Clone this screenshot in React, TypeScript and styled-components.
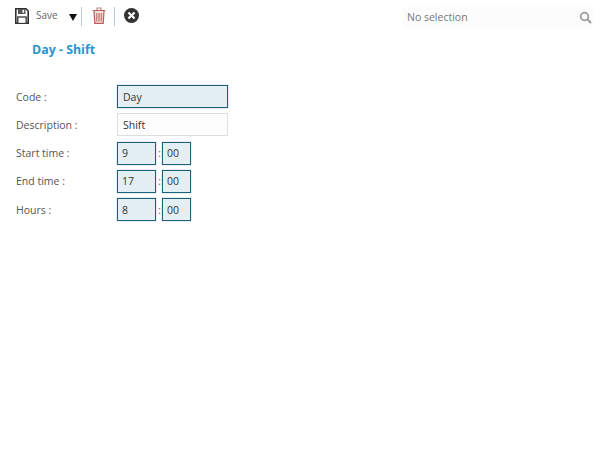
import React from 'react';
import styled, { createGlobalStyle } from 'styled-components';

const Global = createGlobalStyle`
  html, body {
    margin: 0;
    padding: 0;
    background: #fff;
    font-family: "Open Sans", sans-serif;
  }
`;

const Page = styled.div`
  width: 600px;
  height: 461px;
  overflow: hidden;
  background: #fff;
`;

const Toolbar = styled.div`
  height: 26px;
  padding: 6px 6px 0 15px;
  display: flex;
  align-items: flex-start;
`;

const SaveIcon = styled.svg`
  width: 14px;
  height: 16px;
  margin-top: 2px;
`;

const SaveLabel = styled.span`
  margin-left: 7px;
  font-size: 10px;
  line-height: 18px;
  color: #666;
`;

const Caret = styled.div`
  margin: 8px 0 0 11px;
  width: 0;
  height: 0;
  border-left: 4.5px solid transparent;
  border-right: 4.5px solid transparent;
  border-top: 7px solid #111;
`;

const Divider = styled.div<{ $gap: number }>`
  width: 1px;
  height: 19px;
  margin: 1px 0 0 ${p => p.$gap}px;
  background: #b4cbe6;
`;

const TrashIcon = styled.svg`
  width: 14px;
  height: 17px;
  margin: 1px 0 0 10px;
`;

const CloseIcon = styled.svg`
  width: 15px;
  height: 15px;
  margin: 2px 0 0 9px;
`;

const Search = styled.div`
  margin-left: auto;
  width: 191px;
  height: 20px;
  margin-top: 1px;
  padding: 0 2px 0 4px;
  box-sizing: border-box;
  display: flex;
  align-items: center;
  justify-content: space-between;
  background: #fcfcfc;
  font-size: 10.5px;
  color: #777;
`;

const Title = styled.h1`
  margin: 10px 0 0 32px;
  font-size: 12.4px;
  line-height: 16px;
  font-weight: 700;
  color: #2a94d0;
`;

const Form = styled.div`
  margin: 27px 0 0 16px;
  display: flex;
  flex-direction: column;
  gap: 5.25px;
`;

const Row = styled.div`
  height: 23px;
  display: flex;
  align-items: center;
`;

const Label = styled.label`
  width: 101px;
  font-size: 10.5px;
  color: #555;
`;

const Field = styled.div<{ $width: number; $plain?: boolean }>`
  width: ${p => p.$width}px;
  height: 23px;
  box-sizing: border-box;
  display: flex;
  align-items: center;
  padding-left: ${p => (p.$width > 60 ? 5 : 4)}px;
  font-size: 10.5px;
  color: #333;
  background: ${p => (p.$plain ? '#fdfdfd' : '#e4eff4')};
  border: 1px solid ${p => (p.$plain ? '#dedede' : '#1d6078')};
  box-shadow: ${p => (p.$plain ? 'none' : '0 0 1px rgba(29, 96, 120, 0.6)')};
`;

const Colon = styled.span`
  width: 6px;
  padding-left: 1px;
  box-sizing: border-box;
  text-align: center;
  font-size: 10px;
  color: #555;
`;

const times = [
  { label: 'Start time :', hours: '9' },
  { label: 'End time :', hours: '17' },
  { label: 'Hours :', hours: '8' },
];

const App = () => (
  <Page>
    <Global />
    <Toolbar>
      <SaveIcon viewBox="0 0 14 16">
        <path d="M.8.8h10.2l2.2 2.2v12.2H.8z" fill="#fff" stroke="#2e2e2e" strokeWidth="1.6" />
        <rect x="3" y="1" width="7.5" height="5" fill="#555" />
        <rect x="7.5" y="1.8" width="1.6" height="3" fill="#fff" />
        <rect x="2.8" y="9" width="8.4" height="6.5" fill="#fff" stroke="#333" strokeWidth="1.3" />
      </SaveIcon>
      <SaveLabel>Save</SaveLabel>
      <Caret />
      <Divider $gap={4} />
      <TrashIcon viewBox="0 0 14 17">
        <path d="M.5 3.5h13M5 3.5V1h4v2.5" fill="none" stroke="#c08a86" strokeWidth="1.2" />
        <path d="M2 3.5l.8 12.9h8.4l.8-12.9z" fill="#f3dcda" stroke="#b5615c" strokeWidth="1.2" />
        <path d="M4.8 6v8.5M7 6v8.5M9.2 6v8.5" stroke="#b5615c" strokeWidth="1" />
      </TrashIcon>
      <Divider $gap={8} />
      <CloseIcon viewBox="0 0 15 15">
        <circle cx="7.5" cy="7.5" r="7.5" fill="#333" />
        <path d="M4.4 4.4l6.2 6.2M10.6 4.4l-6.2 6.2" stroke="#fff" strokeWidth="2.1" />
      </CloseIcon>
      <Search>
        <span>No selection</span>
        <svg width="13" height="13" viewBox="0 0 13 13">
          <circle cx="5.5" cy="5.5" r="3.8" fill="none" stroke="#999" strokeWidth="1.7" />
          <path d="M8.4 8.4l3.6 3.6" stroke="#999" strokeWidth="2" />
        </svg>
      </Search>
    </Toolbar>
    <Title>Day - Shift</Title>
    <Form>
      <Row>
        <Label>Code :</Label>
        <Field $width={111}>Day</Field>
      </Row>
      <Row>
        <Label>Description :</Label>
        <Field $width={111} $plain>Shift</Field>
      </Row>
      {times.map(t => (
        <Row key={t.label}>
          <Label>{t.label}</Label>
          <Field $width={39}>{t.hours}</Field>
          <Colon>:</Colon>
          <Field $width={29}>00</Field>
        </Row>
      ))}
    </Form>
  </Page>
);

export default App;
